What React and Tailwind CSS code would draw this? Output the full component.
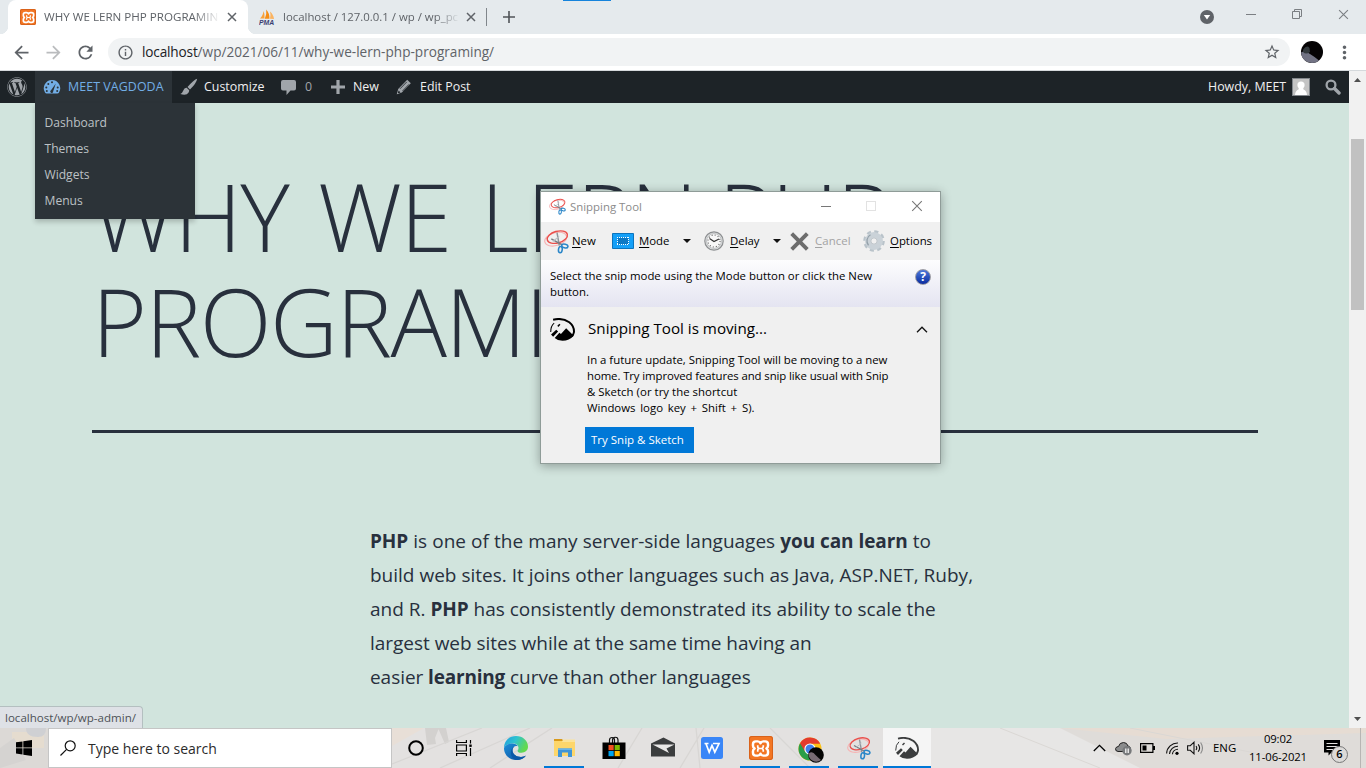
import React from "react";
import { FaWordpress } from "react-icons/fa";
import { MdArrowBack, MdArrowForward, MdRefresh, MdInfoOutline, MdStarBorder, MdMoreVert } from "react-icons/md";

/* ---------- icons ---------- */

function XamppIcon({ className, glyph }) {
  return (
    <span className={`flex items-center justify-center bg-[#f37623] shadow-[inset_0_0_0_1px_#d9621a] ${className}`}>
      <svg viewBox="0 0 24 24" className={glyph} fill="none" stroke="#fff" strokeWidth="3.100" strokeLinejoin="round">
        <path d="M8.500 3H6Q2.500 3 2.500 6.500V8.500Q2.500 10.500 4.500 12 2.500 13.500 2.500 15.500V17.500Q2.500 21 6 21H8.500Q11 21 12 18.500 13 21 15.500 21H18Q21.500 21 21.500 17.500V15.500Q21.500 13.500 19.500 12 21.500 10.500 21.500 8.500V6.500Q21.500 3 18 3H15.500Q13 3 12 5.500 11 3 8.500 3z" />
        <path d="M8.500 8v1.500Q8.500 12 11 12h2Q15.500 12 15.500 9.500V8M8.500 16v-1.500Q8.500 12 11 12h2Q15.500 12 15.500 14.500V16" strokeWidth="2.200" />
      </svg>
    </span>
  );
}

function PmaIcon() {
  return (
    <svg viewBox="0 0 16 16" className="size-4 shrink-0">
      <path d="M1 9.500Q4 7 4.500 2Q6 5 5.500 9.500z" fill="#f9a23a" />
      <path d="M5.800 9.700Q8 5 7.200.5Q10.500 4 10.500 9.700z" fill="#f68d13" />
      <path d="M11 9.700Q12 6 11 2.500Q14.500 5.500 15 10z" fill="#fbb461" />
      <text x="0" y="15.600" fontFamily="Liberation Sans" fontWeight="bold" fontStyle="italic" fontSize="6.800" fill="#3a3f72">PMA</text>
    </svg>
  );
}

function Cross({ className, w = 1.5 }) {
  return (
    <svg viewBox="0 0 10 10" className={className} stroke="currentColor" strokeWidth={w} fill="none">
      <path d="M1 1l8 8M9 1l-8 8" />
    </svg>
  );
}

function SnipIcon({ className }) {
  return (
    <svg viewBox="0 0 24 24" className={className} fill="none">
      <ellipse cx="11.200" cy="9.700" rx="10.800" ry="6.200" transform="rotate(-16 11.200 9.700)" stroke="#f6b4b4" strokeWidth="1.100" />
      <ellipse cx="12.800" cy="7.800" rx="10" ry="5.600" transform="rotate(-16 12.800 7.800)" stroke="#ea4f4b" strokeWidth="1.300" />
      <path d="M12.500 3.500l2.200 12.500" stroke="#8f959b" strokeWidth="1.400" />
      <path d="M7 9.500l10.500 5.800" stroke="#777d83" strokeWidth="1.300" />
      <path d="M8.500 12l6-5" stroke="#b9bec2" strokeWidth="1" />
      <ellipse cx="15.700" cy="19.800" rx="1.800" ry="3" stroke="#2a86c8" strokeWidth="1.500" transform="rotate(8 15.700 19.800)" />
      <ellipse cx="20" cy="16.300" rx="3" ry="1.800" stroke="#2a86c8" strokeWidth="1.500" transform="rotate(14 20 16.300)" />
    </svg>
  );
}

function SketchIcon({ className }) {
  return (
    <svg viewBox="0 0 24 22" className={className}>
      <path d="M3 1.600Q12-.6 18.500 4Q23.400 8 23 13.500Q22.500 16 21 17.500" fill="none" stroke="currentColor" strokeWidth="1.900" />
      <path d="M4 4.800Q.6 7.500 .7 13.500" fill="none" stroke="currentColor" strokeWidth="1" />
      <path d="M1 15.800l5-4.600 1.800 1.700-4.800 5zM4.500 19.200l4.500-5 1.500 1.200L15.500 9.800l7.300 7.200Q18.500 21.800 12 21.800Q7 21.500 4.500 19.200z" fill="currentColor" />
      <path d="M7 7.500l2-2 1 1-2 2z" fill="currentColor" />
    </svg>
  );
}

function EdgeIcon() {
  return (
    <svg viewBox="0 0 24 24" className="size-6">
      <defs>
        <linearGradient id="edgeTop" x1="0" y1="0" x2="1" y2=".4">
          <stop offset="0" stopColor="#1e9be0" />
          <stop offset=".5" stopColor="#2fc3cf" />
          <stop offset="1" stopColor="#63d94f" />
        </linearGradient>
        <linearGradient id="edgeLow" x1="0" y1="0" x2="1" y2="1">
          <stop offset="0" stopColor="#1b8fd9" />
          <stop offset="1" stopColor="#0f4d9c" />
        </linearGradient>
      </defs>
      <path d="M0 12C0 5 5 0 12 0s12 5 12 10.500c0 4-3 6.200-6.500 6.200-3 0-4-1-4-1.800 0-.7 1-1.200 1-3C14.500 9.500 12.300 7.500 9 7.500 4.500 7.500 1 9.500 0 12z" fill="url(#edgeTop)" />
      <path d="M0 12c1-3 4.500-4.500 8-4.500 3 0 5 1.300 5.800 2.800-3-1-5.300 1.200-5.300 4 0 4 4 6.700 8.500 6.700 2.200 0 4-.8 5-1.500C20 22.500 16.500 24 12 24 5 24 0 18.500 0 12z" fill="url(#edgeLow)" />
      <path d="M8.500 14.300c0 4 4 6.700 8.500 6.700 2.200 0 4-.8 5-1.500C20 22.500 16 24.300 12 24 6 23 5 13 10.500 10.600 9.200 11.500 8.500 12.800 8.500 14.300z" fill="#0c59a8" />
    </svg>
  );
}

function FolderIcon() {
  return (
    <svg viewBox="0 0 22 20" className="h-5 w-[22px]">
      <path d="M0 1h8l2 2.500H0z" fill="#d99a1c" />
      <path d="M0 3h21v15H0z" fill="#fdd66b" />
      <path d="M9 1.500h12V4H8z" fill="#fbe39a" />
      <path d="M4 10.500h14V19h-4v-4.500H8V19H4z" fill="#3f95d8" />
      <path d="M4 10.500h14V12H4z" fill="#69b5ea" />
    </svg>
  );
}

function StoreIcon() {
  return (
    <svg viewBox="0 0 24 24" className="size-6">
      <path d="M7.500 7V4a2.500 2.500 0 0 1 5 0V7M10.500 7V4a2.700 2.700 0 0 1 5.500 0V7" fill="none" stroke="#111" strokeWidth="1.200" />
      <path d="M.5 6.500h23V23H.5z" fill="#000" />
      <path d="M6.500 9h5.200v5.200H6.500z" fill="#f25022" />
      <path d="M12.600 9h5.200v5.200h-5.200z" fill="#7fba00" />
      <path d="M6.500 15h5.200v5.200H6.500z" fill="#00a4ef" />
      <path d="M12.600 15h5.200v5.200h-5.200z" fill="#ffb900" />
    </svg>
  );
}

function MailIcon() {
  return (
    <svg viewBox="0 0 24 20" className="mb-[3px] h-5 w-6">
      <path d="M0 6.500L12.500.5 24 6.500V19.500H0z" fill="#3b3d3e" />
      <path d="M1.500 7.500L23.500 7.500 15.500 11.500 18 16z" fill="#e9e8e7" />
    </svg>
  );
}

function ChromeIcon() {
  return (
    <svg viewBox="0 0 26 26" className="ml-[3px] mt-[3px] size-[26px]">
      <circle cx="12" cy="12" r="11.500" fill="#fbc116" />
      <path d="M12 12L2 6.300A11.500 11.500 0 0 0 11.500 23.500L17 14.500z" fill="#299e49" />
      <path d="M12 .5A11.500 11.500 0 0 0 2 6.300L7 14.500 12 6.800h10.200A11.500 11.500 0 0 0 12 .5z" fill="#e33b2e" />
      <circle cx="12" cy="12" r="5.600" fill="#fff" />
      <circle cx="12" cy="12" r="4.500" fill="#3f7fea" />
      <circle cx="18" cy="18" r="7.800" fill="#050505" />
      <path d="M10.500 16.500q4-3 7 1.500 2.500 2.500 5.500 5a7.800 7.800 0 0 1-12.500-6.500z" fill="#776a72" />
    </svg>
  );
}

/* ---------- browser frame ---------- */

function TabStrip() {
  return (
    <div className="flex h-[34px] shrink-0 items-stretch bg-[#e5eaed] pl-2 text-[11.600px] text-[#5f6368]">
      <div className="relative flex w-60 items-center rounded-t-lg bg-white pl-3">
        <span className="absolute -left-2 bottom-0 size-2 bg-[radial-gradient(circle_at_0_0,#e5eaed_8px,white_8.500px)]" />
        <span className="absolute -right-2 bottom-0 size-2 bg-[radial-gradient(circle_at_100%_0,#e5eaed_8px,white_8.500px)]" />
        <XamppIcon className="size-4 rounded-[2px]" glyph="size-[13px]" />
        <span className="ml-2 w-[176px] overflow-hidden whitespace-nowrap [mask-image:linear-gradient(90deg,#000_85%,transparent)]">
          WHY WE LERN PHP PROGRAMIN
        </span>
        <Cross className="ml-[7px] h-[10px] w-[10px]" />
      </div>
      <div className="flex w-[238px] items-center pl-[11px]">
        <PmaIcon />
        <span className="ml-2 w-[177px] overflow-hidden whitespace-nowrap text-[11.400px] [mask-image:linear-gradient(90deg,#000_86%,transparent)]">
          localhost / 127.0.0.1 / wp / wp_pc
        </span>
        <Cross className="ml-[6px] h-[10px] w-[10px]" />
      </div>
      <div className="my-2 w-px bg-[#80868b]" />
      <svg viewBox="0 0 12 12" className="ml-4 h-3 w-3 self-center" stroke="#505458" strokeWidth="1.600">
        <path d="M6 0v12M0 6h12" />
      </svg>
      <div className="ml-12 h-px w-12 bg-[#1583dc]" />
      <div className="ml-auto flex w-[166px] items-start pt-[9px] text-[#7b7f83]">
        <svg viewBox="0 0 14 14" className="mt-[1px] h-[14px] w-[14px]">
          <circle cx="7" cy="7" r="7" fill="#5f6368" />
          <path d="M3.800 5h6.400L7 9.500z" fill="#fff" />
        </svg>
        <div className="ml-8 mt-[5px] h-px w-[10px] bg-[#7b7f83]" />
        <svg viewBox="0 0 10 10" className="ml-9 h-[10px] w-[10px]" fill="none" stroke="currentColor">
          <path d="M.5 2.500h7v7h-7zM2.500 2.500v-2h7v7h-2" />
        </svg>
        <Cross w={1} className="ml-[36px] h-[11px] w-[11px]" />
      </div>
    </div>
  );
}

function AddressBar() {
  return (
    <div className="flex h-[37px] shrink-0 items-center border-b border-[#d5d9dc] bg-white text-[#5f6368]">
      <MdArrowBack className="ml-[11px] size-[21px]" />
      <MdArrowForward className="ml-[11px] size-[21px] text-[#babcbe]" />
      <MdRefresh className="ml-[11px] size-[21px]" />
      <div className="ml-[12px] flex h-7 w-[1182px] items-center rounded-full bg-[#f1f3f4] pl-[9px] pr-[9px]">
        <MdInfoOutline className="size-[17px]" />
        <span className="ml-2 text-[13.600px] text-[#5f6368]">
          <span className="tracking-[-.15px] text-[#202124]">localhost</span>/wp/2021/06/11/why-we-lern-php-programing/
        </span>
        <MdStarBorder className="ml-auto size-[18px]" />
      </div>
      <svg viewBox="0 0 22 22" className="ml-[11px] size-[22px]">
        <circle cx="11" cy="11" r="11" fill="#050304" />
        <path d="M0 11.500Q4 9 9 13Q14 16 18 19.500Q15 22 11 22Q1 21 0 11.500z" fill="#727384" />
        <path d="M2 8.500q4-5 6.500-1.500l.5 4q-4 3-7 0z" fill="#33393d" />
      </svg>
      <MdMoreVert className="ml-[11px] size-[21px]" />
    </div>
  );
}

/* ---------- WordPress page ---------- */

function AdminBar() {
  return (
    <div className="flex h-8 items-center bg-[#1d2327] text-[12.400px] text-[#f0f0f1] [&_span]:pt-px">
      <div className="flex w-[35px] pl-[7px]">
        <FaWordpress className="size-5 text-[#a0a5aa]" />
      </div>
      <div className="relative flex h-8 w-[137px] items-center bg-[#2c3338] pl-2 text-[#72aee6]">
        <svg viewBox="0 0 18 16" className="h-4 w-[18px]">
          <path d="M9 1a8.300 8.300 0 0 1 7 12.600q-.6 1-1.600 1H3.600q-1 0-1.600-1A8.300 8.300 0 0 1 9 1z" fill="currentColor" />
          <g fill="#2c3338">
            <circle cx="9" cy="3.300" r="1" /><circle cx="5.300" cy="5" r="1" /><circle cx="3.300" cy="8.500" r="1" /><circle cx="3.800" cy="12" r="1" />
            <circle cx="14.700" cy="8.500" r="1" /><circle cx="14.200" cy="12" r="1" />
            <path d="M12.800 4.500l-2.600 7.700a1.500 1.500 0 1 1-2.200-1z" />
          </g>
        </svg>
        <span className="ml-[7px] whitespace-nowrap tracking-[.08px]">MEET VAGDODA</span>
        <div className="absolute left-0 top-8 z-10 w-40 bg-[#2c3338] pb-[5px] pt-[7px] text-[12.100px] text-[#bcc1c5] shadow-[0_3px_5px_rgba(0,0,0,0.2)]">
          {["Dashboard", "Themes", "Widgets", "Menus"].map((t) => (
            <div key={t} className="h-[26px] pl-[9.500px] leading-[26px]">{t}</div>
          ))}
        </div>
      </div>
      <svg viewBox="0 0 18 18" className="ml-[8px] size-[18px]" fill="#a0a5aa">
        <path d="M17.200.7Q14 1.500 7.500 9l2.500 2.600Q16.500 5 17.200.7zM6.700 9.800Q4.300 9.500 3.300 12.500 2.500 15 .3 16 6.500 18 8.600 14.500 9.300 13 9.200 12.300z" />
      </svg>
      <span className="ml-[6px] w-[61px]">Customize</span>
      <svg viewBox="0 0 16 17" className="ml-4 h-[17px] w-4" fill="#a0a5aa">
        <path d="M2 1h11q2 0 2 2v6.500q0 2-2 2H9.500L5.500 16v-4.500H2q-2 0-2-2V3q0-2 2-2z" />
      </svg>
      <span className="ml-[8px] w-[10px] text-[#a0a5aa]">0</span>
      <svg viewBox="0 0 14 14" className="ml-4 size-[14px]" stroke="#a0a5aa" strokeWidth="3.200">
        <path d="M7 0v14M0 7h14" />
      </svg>
      <span className="ml-[8px] w-[28px]">New</span>
      <svg viewBox="0 0 16 16" className="ml-[15px] size-4">
        <path d="M11.200.8l3.600 3.500-9 9.200L.8 15.200 2.200 10z" fill="#a0a5aa" />
        <path d="M4 9.800l6.800-6.900M6.500 12L13 5.300" stroke="#1d2327" strokeWidth=".8" />
        <path d="M1.500 14.500l1.200-3 1.800 2z" fill="#1d2327" />
        <path d="M.8 15.200l.6-2 1.300 1.300z" fill="#a0a5aa" />
      </svg>
      <span className="ml-[8px]">Edit Post</span>
      <span className="ml-auto w-[79px] whitespace-nowrap">Howdy, MEET</span>
      <svg viewBox="0 0 18 18" className="ml-[5px] size-[18px]">
        <path d="M0 0h18v18H0z" fill="#82878c" />
        <path d="M1 1h16v16H1z" fill="#c4c4c4" />
        <circle cx="9" cy="7" r="3.600" fill="#fff" />
        <path d="M3 17q.3-4.500 3.500-5.500L7 9h4l.5 2.500Q14.700 12.500 15 17z" fill="#fff" />
      </svg>
      <svg viewBox="0 0 16 16" className="ml-[15px] mr-2 size-4" fill="none" stroke="#a0a5aa">
        <circle cx="6" cy="6" r="4.400" strokeWidth="2.300" />
        <path d="M9.500 9.500l4.500 4.500" strokeWidth="3.400" strokeLinecap="round" />
      </svg>
    </div>
  );
}

function Page() {
  const B = "font-bold tracking-[-.1px]";
  return (
    <div className="flex min-h-0 flex-1">
      <div className="relative w-[1349px] overflow-hidden bg-[#d1e4dd] text-[#28303d]">
        <AdminBar />
        <div className="ml-[92px] w-[1166px] border-b-3 border-[#28303d] pb-[56px] pt-[61px]">
          <h1 className="text-[94px] font-light leading-[105px] tracking-[-1.600px]">
            <span className="[word-spacing:7px]">WHY WE </span>
            <span className="tracking-[-2.100px]">LERN PHP</span>
            <br />
            PROGRAMING
          </h1>
        </div>
        <p className="ml-[370px] mt-[91px] whitespace-nowrap text-[19px] leading-[34px]">
          <span className="[word-spacing:.2px]">
            <b className={B}>PHP</b> is one of the many server-side languages <b className={B}>you can learn</b> to
          </span>
          <br />
          build web sites. It joins other languages such as Java, ASP.NET, Ruby,
          <br />
          and R. <b className={B}>PHP</b> has consistently demonstrated its ability to scale the
          <br />
          <span className="tracking-[-.03px]">largest web sites while at the same time having an</span>
          <br />
          <span className="tracking-[-.05px]">
            easier <b className="font-bold tracking-[-.2px]">learning</b> curve than other languages
          </span>
        </p>
        <div className="absolute bottom-0 left-0 h-[22px] w-[143px] rounded-tr border-r border-t border-[#b4bfc0] bg-[#dee1e6] pl-[5px] text-[11.550px] leading-[22px] text-[#4d5156]">
          localhost/wp/wp-admin/
        </div>
      </div>
      <div className="flex w-[17px] flex-col items-center bg-[#f1f1f1]">
        <svg viewBox="0 0 7 4" className="mt-[7px] h-1 w-[7px]"><path d="M3.500 0L7 4H0z" fill="#505050" /></svg>
        <div className="mt-[57px] h-[171px] w-[13px] bg-[#c1c1c1]" />
        <svg viewBox="0 0 7 4" className="mb-[7px] mt-auto h-1 w-[7px]"><path d="M3.500 4L7 0H0z" fill="#505050" /></svg>
      </div>
    </div>
  );
}

/* ---------- Snipping Tool window ---------- */

const Caret = ({ className }) => (
  <svg viewBox="0 0 8 4" className={`h-1 w-2 ${className}`}><path d="M0 0h8L4 4z" fill="#111" /></svg>
);

function SnippingTool() {
  return (
    <div className="absolute left-[540px] top-[191px] h-[273px] w-[401px] border border-[#8f9c98] bg-[#f0f0f0] text-[11.400px] text-black shadow-[0_2px_10px_rgba(0,0,0,0.32)]">
      <div className="flex h-[30px] items-center bg-white pl-[8px] text-[#8b8b8b]">
        <SnipIcon className="mb-0.5 size-[17px]" />
        <span className="ml-[4px] w-[74px]">Snipping Tool</span>
        <div className="mb-0.5 ml-[177px] h-px w-[10px] bg-[#777]" />
        <div className="mb-0.5 ml-[35px] size-[10px] border border-[#e2e2e2]" />
        <Cross w={0.9} className="mb-0.5 ml-[35px] h-[12px] w-[12px] text-[#777]" />
      </div>
      <div className="flex h-[38px] items-center pl-[3px] [&_u]:underline-offset-2">
        <SnipIcon className="size-[25px]" />
        <span className="ml-[3px] w-[26px]"><u>N</u>ew</span>
        <svg viewBox="0 0 22 16" className="ml-[14px] h-4 w-[22px]">
          <path d="M.5.500h21v15H.5z" fill="#14a0f8" stroke="#0c74bd" />
          <path d="M5.500 4.500h11v7h-11z" fill="#0d78c4" />
          <path d="M5 4.500h12M5 11.500h12M5.500 4v8M16.500 4v8" fill="none" stroke="#fff" strokeDasharray="1 1" shapeRendering="crispEdges" />
        </svg>
        <span className="ml-[5px] w-[33px]"><u>M</u>ode</span>
        <Caret className="ml-[11px]" />
        <svg viewBox="0 0 20 20" className="ml-[13px] size-5">
          <circle cx="10" cy="10" r="9.200" fill="#dfe1e2" stroke="#8e9092" strokeWidth="1.200" />
          <circle cx="10" cy="10" r="7.400" fill="#f8f8f8" stroke="#b4b6b8" strokeWidth=".8" />
          <circle cx="10" cy="10" r="6" fill="none" stroke="#666" strokeWidth="1.200" strokeDasharray="1 2.140" />
          <path d="M5.500 7.500L10 10.500l5-2.500" fill="none" stroke="#333" strokeWidth="1.200" />
        </svg>
        <span className="ml-[6px] w-[31px]"><u>D</u>elay</span>
        <Caret className="ml-[12px]" />
        <svg viewBox="0 0 19 19" className="ml-[9px] size-[19px]" stroke="#6d6d6d" strokeWidth="3.900">
          <path d="M1.700 1.700l15.600 15.600M17.300 1.700L1.700 17.300" />
        </svg>
        <span className="ml-[6px] w-[38px] tracking-[.1px] text-[#a3a3a3]"><u>C</u>ancel</span>
        <svg viewBox="0 0 22 22" className="ml-[10px] size-[22px]">
          <circle cx="11" cy="11" r="9.300" fill="none" stroke="#b9c3ca" strokeWidth="3" strokeDasharray="4 3.300" />
          <circle cx="11" cy="11" r="6.200" fill="none" stroke="#cad2d8" strokeWidth="5.500" />
          <path d="M7.500 4.800a7 7 0 0 0-2 10.500" fill="none" stroke="#93a0a9" strokeWidth="1.300" />
          <circle cx="11" cy="11" r="3.200" fill="#f0f0f0" stroke="#aab4bb" strokeWidth=".8" />
        </svg>
        <span className="ml-[5px]"><u>O</u>ptions</span>
      </div>
      <div className="flex h-[47px] items-start justify-between bg-linear-to-b from-[#fdfdfe] to-[#e4e4f1] pl-[9px] pr-[9px] pt-[8px] leading-4">
        <span className="whitespace-nowrap">
          Select the snip mode using the Mode button or click the New
          <br />
          button.
        </span>
        <span className="mt-px flex size-4 items-center justify-center rounded-full border-[1.500px] border-[#9b9ba3] bg-linear-to-b from-[#4f78da] to-[#0c2aa0] text-[12px] font-bold text-white">
          ?
        </span>
      </div>
      <div className="flex h-[43px] items-center pl-[9px]">
        <SketchIcon className="mt-0.5 h-[23px] w-[25px]" />
        <span className="ml-[13px] text-[15.200px]">Snipping Tool is moving...</span>
        <svg viewBox="0 0 12 7" className="ml-auto mr-[12px] mt-0.5 h-[7px] w-3" fill="none" stroke="#111" strokeWidth="1.300">
          <path d="M1 6.200l5-5 5 5" />
        </svg>
      </div>
      <div className="whitespace-nowrap pl-[46px] pt-[2px] leading-4">
        <span className="tracking-[-.01px]">In a future update, Snipping Tool will be moving to a new</span>
        <br />
        <span className="tracking-[-.1px]">home. Try improved features and snip like usual with Snip</span>
        <br />
        <span className="tracking-[.03px]">&amp; Sketch (or try the shortcut</span>
        <br />
        <span className="[word-spacing:1.800px]">Windows logo key + Shift + S).</span>
      </div>
      <button className="ml-[44px] mt-[11px] block h-[26px] w-[109px] bg-[#0078d7] pl-[6px] text-left text-[11.500px] text-white">
        Try Snip &amp; Sketch
      </button>
    </div>
  );
}

/* ---------- taskbar ---------- */

const APPS = [
  { id: "edge", icon: <EdgeIcon /> },
  { id: "files", icon: <FolderIcon />, open: true },
  { id: "store", icon: <StoreIcon /> },
  { id: "mail", icon: <MailIcon /> },
  {
    id: "wps",
    icon: (
      <svg viewBox="0 0 22 22" className="size-[22px]">
        <rect width="22" height="22" rx="2.500" fill="#3a86f7" />
        <path d="M3.500 6.500h4M5 6.800l3.200 8.400L11 8.500l2.800 6.700L18 6.500h-6" fill="none" stroke="#fff" strokeWidth="1.700" />
      </svg>
    ),
  },
  { id: "xampp", icon: <XamppIcon className="size-6 rounded-[3px]" glyph="size-[19px]" />, open: true },
  { id: "chrome", icon: <ChromeIcon />, open: true },
  { id: "snip", icon: <SnipIcon className="size-6" />, open: true },
  { id: "sketch", icon: <SketchIcon className="h-[22px] w-6 text-[#3b3d3e]" />, active: true },
];

function Taskbar() {
  return (
    <div className="relative flex h-10 shrink-0 overflow-hidden bg-[#e3e1e0] text-black">
      <svg viewBox="0 0 1366 40" className="absolute inset-0 h-10 w-[1366px]">
        <path d="M0 0h48v40H0z" fill="#dcd9d6" />
        <path d="M12 4h32v16H12z" fill="#e5dccf" />
        <path d="M0 20l14-10 12 22-26 8z" fill="#d5d3d1" />
        <path d="M26 0h20q0 9-8 9Q26 9 26 0z" fill="#cfd0d3" />
        <path d="M392 0h32l-32 18z" fill="#e8dfd7" />
        <path d="M425 0h14l-4 10 1 6-9 1zM438 0h8l3 14-4 2z" fill="#d3d1cf" />
        <g stroke="#d8d6d4" strokeWidth="1.300">
          <path d="M392 36l90-36M440 40l90-40M490 40l62-40M618 40l24-40M680 40l24-40M696 0l4 40M770 0l40 40M890 0l60 40M960 0l100 40" />
        </g>
        <path d="M930 0h436v40H930z" fill="#dfdcd9" />
        <path d="M1060 0h306v5l-200 6z" fill="#e6dcd3" />
        <path d="M930 0h130l80 40H930z" fill="#e7e6e5" />
        <path d="M1000 0l100 40M1130 0l150 30" stroke="#dad7d4" />
      </svg>
      <div className="relative flex w-12 items-center justify-center">
        <svg viewBox="0 0 16 16" className="size-4">
          <path d="M0 2.300l6.500-.9v6.100H0zM7.300 1.300L16 0v7.500H7.300zM0 8.300h6.500v6.200L0 13.600zM7.300 8.300H16V16l-8.700-1.300z" />
        </svg>
      </div>
      <div className="relative flex w-[344px] items-center border border-[#c5c5c5] bg-white pl-[11px] text-[#2b2b2b]">
        <svg viewBox="0 0 16 16" className="size-4" fill="none" stroke="#111" strokeWidth="1.200">
          <circle cx="10.200" cy="5.800" r="5" />
          <path d="M6.600 9.400L.5 15.500" />
        </svg>
        <span className="ml-3 text-[14px]">Type here to search</span>
      </div>
      <div className="relative flex w-[99px] items-center pl-4">
        <svg viewBox="0 0 16 16" className="size-4" fill="none" stroke="#000" strokeWidth="2"><circle cx="8" cy="8" r="6.800" /></svg>
        <svg viewBox="0 0 16 16" className="ml-8 size-4" fill="none" stroke="#000" strokeWidth="1.200">
          <path d="M.6 0v2.500h9.800V0M.6 16v-2.500h9.800V16M.6 5h9.800v6H.6zM14.500 0v3.500M14.500 8v8" />
          <path d="M13.300 4.500h2.400v2.400h-2.400z" fill="#000" stroke="none" />
        </svg>
      </div>
      <div className="relative flex">
        {APPS.map((a) => (
          <div
            key={a.id}
            className={`relative flex items-center justify-center ${a.active ? "w-12 bg-[#f5f5f5]" : "w-[49px]"}`}
          >
            {a.icon}
            {(a.open || a.active) && (
              <span className={`absolute bottom-0 h-0.5 bg-[#0078d7] ${a.active ? "inset-x-0" : "left-[4px] w-10"}`} />
            )}
          </div>
        ))}
      </div>
      <div className="relative ml-auto flex w-[273px] items-center text-[11.300px]">
        <svg viewBox="0 0 13 8" className="h-2 w-[13px]" fill="none" stroke="#000" strokeWidth="1.300"><path d="M.8 7l5.700-5.700L12.200 7" /></svg>
        <svg viewBox="0 0 17 15" className="ml-[9px] h-[15px] w-[17px]">
          <path d="M3 10.500Q0 10 .6 7.500 1.200 5.500 3.500 5.500 4.500 1.500 8.500 1.500q3.500 0 4.500 3.500 2.500.5 2.500 3v2.500z" fill="#8b8c8d" stroke="#222" />
          <circle cx="12" cy="9.800" r="4.700" fill="#77797b" />
          <path d="M10.800 7.600v4.400M13.200 7.600v4.400" stroke="#fff" strokeWidth="1.200" />
        </svg>
        <svg viewBox="0 0 15 10" className="ml-[8px] h-[10px] w-[15px]">
          <path d="M.6.6h12.300v8.800H.6z" fill="none" stroke="#000" strokeWidth="1.200" />
          <path d="M2.500 2.500h4v5h-4zM13 3h2v4h-2z" />
        </svg>
        <svg viewBox="0 0 13 13" className="ml-[11px] size-[13px]" fill="none" stroke="#111" strokeWidth="1.100">
          <path d="M.6 11.500A11 11 0 0 1 12 1M3.500 12A8.500 8.500 0 0 1 12 4.200M6.400 12.300A5.600 5.600 0 0 1 12 7.300" />
          <circle cx="11" cy="11.300" r="1.600" fill="#000" stroke="none" />
        </svg>
        <svg viewBox="0 0 17 14" className="ml-[8px] h-[14px] w-[17px]" fill="none" stroke="#111" strokeWidth="1.100">
          <path d="M.6 4.700h2.700L7 1.200v11.600L3.300 9.300H.6zM9 5q1.500 2 0 4M11.200 3.300q2.800 3.700 0 7.400" />
          <path d="M13.600 1.500q3.800 5.500 0 11" stroke="#888" />
        </svg>
        <span className="ml-[9px] w-[24px] text-[11.400px]">ENG</span>
        <span className="ml-[9px] flex w-[64px] flex-col items-center leading-[18px]">
          <span className="tracking-[-.2px]">09:02</span>
          <span className="tracking-[-.1px]">11-06-2021</span>
        </span>
        <span className="relative ml-[14px] h-10 w-6">
          <svg viewBox="0 0 24 24" className="mt-[12px] size-6">
            <path d="M0 0h16v12.500H7.500l-3 3v-3H0z" />
            <path d="M2.500 3.500h11M2.500 6.500h11M2.500 9.500h7" stroke="#e4e2e0" strokeWidth="1.100" />
          </svg>
          <span className="absolute left-[7px] top-[18px] flex size-[17px] items-center justify-center rounded-full border border-[#777] bg-[#dcdad8] text-[11px] font-semibold">
            6
          </span>
        </span>
        <span className="ml-[12px] h-10 w-px bg-[#b7b5b3]" />
      </div>
    </div>
  );
}

export default function App() {
  return (
    <div className="relative flex h-[768px] w-[1366px] flex-col overflow-hidden font-['Open_Sans','Noto_Sans',sans-serif]">
      <TabStrip />
      <AddressBar />
      <Page />
      <Taskbar />
      <SnippingTool />
    </div>
  );
}
